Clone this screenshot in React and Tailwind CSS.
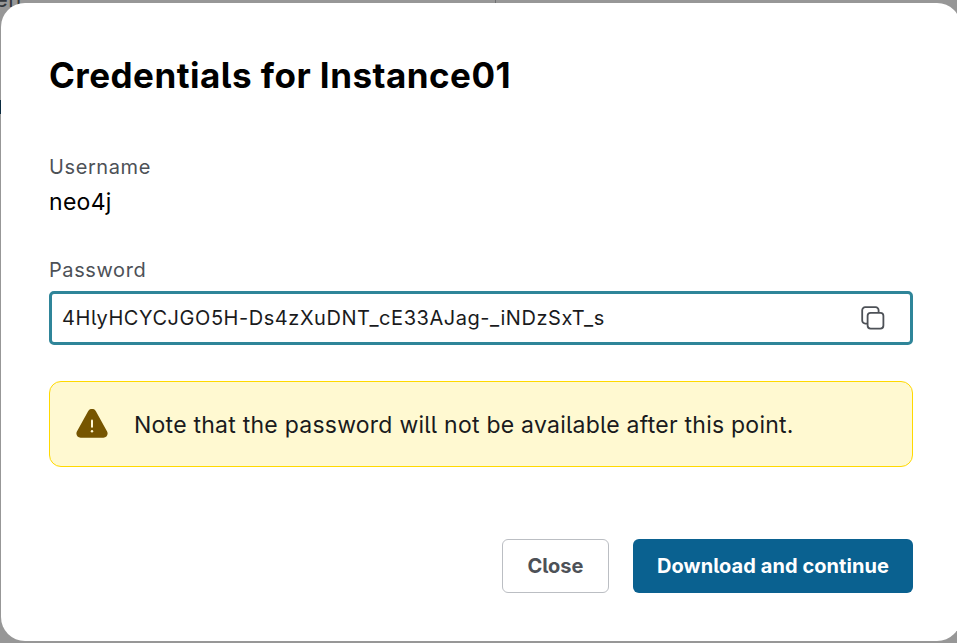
function CopyIcon() {
  return (
    <svg className="size-6 shrink-0" viewBox="0 0 24 24" fill="none" stroke="#4d5157" strokeWidth="1.8">
      <path d="M6.6 17.6H4.2a3 3 0 0 1-3-3V4.2a3 3 0 0 1 3-3h10.4a3 3 0 0 1 3 3v2.4" />
      <rect x="6.6" y="6.8" width="15.8" height="15.8" rx="3" />
    </svg>
  );
}

function WarningIcon() {
  return (
    <svg className="mb-[2px] h-[29px] w-8 shrink-0" viewBox="0 0 32 29">
      <path
        d="M12.1 2.2a4.4 4.4 0 0 1 7.8 0l11.2 20.4c1.5 2.8-.5 6.2-3.7 6.2H4.6c-3.2 0-5.2-3.4-3.7-6.2z"
        fill="#765500"
      />
      <path d="M16 11.4v6.4" stroke="#fff9d6" strokeWidth="2" strokeLinecap="round" />
      <circle cx="16" cy="22.2" r="1.2" fill="#fff9d6" />
    </svg>
  );
}

export default function App() {
  return (
    <div className="relative h-[643px] w-[957px] overflow-hidden bg-[#979797] pt-[3px] pl-px font-['Inter',sans-serif] [font-feature-settings:'cv05']">
      <span className="absolute -top-[14px] -left-[5px] text-[22px] leading-[26px] tracking-[0.5px] text-[#33373c]">en</span>
      <span className="absolute top-0 left-[495px] h-[3px] w-px bg-[#6f7072]" />
      <span className="absolute top-[100px] left-0 h-[14px] w-px bg-[#0a2b40]" />
      <div className="relative flex h-[638px] w-[960px] flex-col rounded-3xl bg-white px-12 pt-12">
        <h1 className="h-12 text-[35px] leading-[48px] font-bold whitespace-nowrap text-black">
          <span className="tracking-[0.47px]">Credentials for Instance01</span>
        </h1>
        <div className="mt-[54px] text-[20px] leading-7 text-[#4d5157]">
          <span className="tracking-[0.6px]">Username</span>
        </div>
        <div className="mt-[5px] text-[23px] leading-8 text-black">
          <span className="tracking-[0.3px]">neo4j</span>
        </div>
        <div className="mt-[38px] text-[20px] leading-7 text-[#4d5157]">
          <span className="tracking-[0.6px]">Password</span>
        </div>
        <div className="mt-[7px] flex h-[54px] w-[864px] items-center justify-between rounded-[5px] border-[3px] border-[#2f8599] pr-[25px] pl-[10px] text-[20px] text-[#1a1b1d]">
          <span className="tracking-[0.55px]">4HlyHCYCJGO5H-Ds4zXuDNT_cE33AJag-_iNDzSxT_s</span>
          <CopyIcon />
        </div>
        <div className="mt-9 flex h-[86px] w-[864px] items-center gap-[26px] rounded-xl border border-[#ffd900] bg-[#fff9d1] pl-[26px] text-[23px] text-[#1a1b1d]">
          <WarningIcon />
          <span className="pt-[2px] tracking-[0.24px]">Note that the password will not be available after this point.</span>
        </div>
        <div className="mt-[72px] flex w-[864px] justify-end gap-6 text-[20px] font-bold">
          <button className="h-[54px] w-[107px] rounded-md border border-[#bbbec3] text-[#4d5157]">
            <span>Close</span>
          </button>
          <button className="h-[54px] w-[280px] rounded-md bg-[#0a6190] text-white">
            <span className="tracking-[0.07px]">Download and continue</span>
          </button>
        </div>
      </div>
    </div>
  );
}
